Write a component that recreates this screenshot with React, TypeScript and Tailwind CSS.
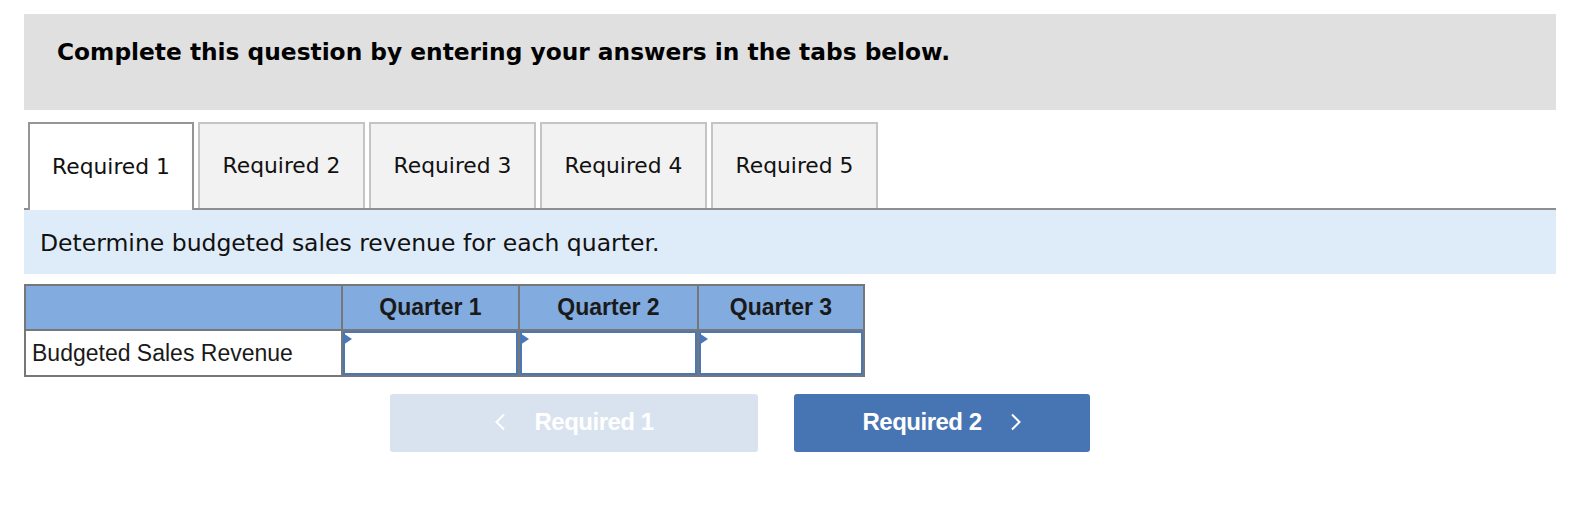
import React from "react";

const verdana = { fontFamily: '"DejaVu Sans", Verdana, sans-serif' };
const arial = { fontFamily: '"Liberation Sans", Arial, sans-serif' };

function Chevron({ dir }: { dir: "left" | "right" }) {
  return (
    <svg width="12" height="18" viewBox="0 0 12 18" fill="none">
      {dir === "left" ? (
        <polyline points="10,1.5 2.5,9 10,16.5" stroke="white" strokeWidth="2" />
      ) : (
        <polyline points="2,1.5 9.5,9 2,16.5" stroke="white" strokeWidth="2" />
      )}
    </svg>
  );
}

function InputCell() {
  return (
    <td className="border-2 border-[#777777] p-0 h-[46px]">
      <div className="relative h-[44px] w-full border-2 border-[#4a77b6] bg-white">
        <div className="absolute left-[-2px] top-[0px] w-0 h-0 border-t-[6px] border-b-[6px] border-l-[9px] border-t-transparent border-b-transparent border-l-[#4a77b6]" />
      </div>
    </td>
  );
}

export default function App() {
  const tabs = ["Required 1", "Required 2", "Required 3", "Required 4", "Required 5"];
  return (
    <div className="w-[1594px] h-[514px] bg-white pt-[14px] pl-[24px] overflow-hidden">
      <div className="w-[1532px]">
        <div className="h-[96px] bg-[#e0e0e0] pl-[33px] pt-[24px]">
          <span className="text-[23.3px] leading-[28px] font-bold text-black" style={verdana}>
            Complete this question by entering your answers in the tabs below.
          </span>
        </div>

        <div className="mt-[12px] h-[88px] flex items-start gap-[4px] pl-[4px] border-b-2 border-[#8e8e8e]">
          {tabs.map((t, i) =>
            i === 0 ? (
              <div
                key={t}
                className="relative z-10 w-[166px] h-[88px] bg-white border-2 border-b-0 border-[#959595] flex items-center justify-center text-[21.8px] text-[#111]"
                style={verdana}
              >
                {t}
              </div>
            ) : (
              <div
                key={t}
                className="w-[167px] h-[86px] bg-[#f2f2f2] border-2 border-b-0 border-[#c4c4c4] flex items-center justify-center text-[21.8px] text-[#111]"
                style={verdana}
              >
                {t}
              </div>
            )
          )}
        </div>

        <div className="h-[64px] bg-[#deebf8] flex items-center pl-[16px] pt-[4px]">
          <span className="text-[23.5px] text-[#111]" style={verdana}>
            Determine budgeted sales revenue for each quarter.
          </span>
        </div>

        <table className="mt-[10px] border-collapse" style={arial}>
          <colgroup>
            <col className="w-[317px]" />
            <col className="w-[177px]" />
            <col className="w-[179px]" />
            <col className="w-[166px]" />
          </colgroup>
          <thead>
            <tr className="h-[45px] bg-[#82abdf]">
              <th className="border-2 border-[#777777]"></th>
              <th className="border-2 border-[#777777] text-[23px] font-bold text-[#1a1a1a] text-center">Quarter 1</th>
              <th className="border-2 border-[#777777] text-[23px] font-bold text-[#1a1a1a] text-center">Quarter 2</th>
              <th className="border-2 border-[#777777] text-[23px] font-bold text-[#1a1a1a] text-center">Quarter 3</th>
            </tr>
          </thead>
          <tbody>
            <tr className="bg-white">
              <td className="border-2 border-[#777777] pl-[6px] text-[23px] text-[#1a1a1a] h-[46px] pt-[1px]">
                Budgeted Sales Revenue
              </td>
              <InputCell />
              <InputCell />
              <InputCell />
            </tr>
          </tbody>
        </table>

        <div className="mt-[17px] ml-[366px] flex gap-[36px]" style={arial}>
          <div className="w-[368px] h-[58px] rounded-[3px] bg-[#d9e3ef] flex items-center justify-center gap-[28px] pb-[2px]">
            <Chevron dir="left" />
            <span className="text-[24px] font-bold text-white tracking-[-0.5px]">Required 1</span>
          </div>
          <div className="w-[296px] h-[58px] rounded-[3px] bg-[#4775b3] flex items-center justify-center gap-[28px] pb-[2px]">
            <span className="text-[24px] font-bold text-white tracking-[-0.5px]">Required 2</span>
            <Chevron dir="right" />
          </div>
        </div>
      </div>
    </div>
  );
}
